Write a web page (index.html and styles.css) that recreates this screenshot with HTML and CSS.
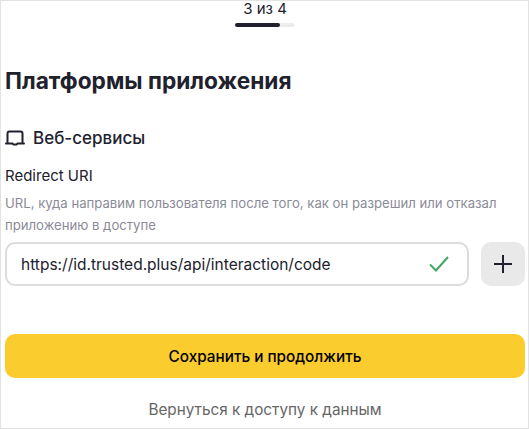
FILE: index.html
```html
<!DOCTYPE html>
<html lang="ru">
  <head>
    <meta charset="UTF-8" />
    <meta name="viewport" content="width=device-width, initial-scale=1.0" />
    <title>Платформы приложения</title>

    <link rel="stylesheet" href="styles.css">
  </head>
  <body>
    <div class="page">
      <!-- Шаги -->
      <div class="steps">
        <span class="steps-text">3 из 4</span>
        <div class="progress"><div class="progress-fill"></div></div>
      </div>

      <h1 class="title">Платформы приложения</h1>

      <div class="platform">
        <svg class="platform-icon" width="20" height="16" viewBox="0 0 20 16" fill="none" stroke="#21212e" stroke-width="2">
          <path d="M2.5 13V3.5C2.5 2.4 3.1 1.5 4.5 1.5H15.5C16.9 1.5 17.5 2.4 17.5 3.5V13" />
          <path d="M1 13.6H7.5L8.5 14.6H11.5L12.5 13.6H19" stroke-linecap="round" />
        </svg>
        <span class="platform-name">Веб-сервисы</span>
      </div>

      <div class="field-label">Redirect URI</div>
      <div class="field-hint">URL, куда направим пользователя после того, как он разрешил или отказал приложению в доступе</div>

      <div class="field-row">
        <div class="input">
          <span class="input-value">https://id.trusted.plus/api/interaction/code</span>
          <svg width="22" height="18" viewBox="0 0 22 18" fill="none" stroke="#3fa665" stroke-width="2">
            <path d="M2 9.5L8 15.5L20 2" />
          </svg>
        </div>
        <button class="add-btn" aria-label="Добавить">
          <svg width="20" height="20" viewBox="0 0 20 20" fill="none" stroke="#21212e" stroke-width="2">
            <path d="M10 1V19M1 10H19" />
          </svg>
        </button>
      </div>

      <button class="save-btn">Сохранить и продолжить</button>
      <a class="back-link">Вернуться к доступу к данным</a>
    </div>
  </body>
</html>
```

FILE: styles.css
```css
body {
  margin: 0;
  background-color: #fff;
}

.page {
  box-sizing: border-box;
  width: 529px;
  height: 429px;
  padding: 0 3px 0 4px;
  border: 1px solid #e2e2e2;
  overflow: hidden;
  font-family: Inter, "Noto Sans", sans-serif;
  color: #21212e;
}

/* Шаги */
.steps {
  display: flex;
  flex-direction: column;
  align-items: center;
}

.steps-text {
  font-size: 15px;
  line-height: 16px;
}

.progress {
  width: 60px;
  height: 4px;
  margin-top: 6px;
  border-radius: 2px;
  background-color: #ececec;
}

.progress-fill {
  width: 45px;
  height: 4px;
  border-radius: 2px;
  background-color: #21212e;
}

.title {
  margin: 39px 0 0;
  font-size: 22.7px;
  line-height: 30px;
  font-weight: 700;
}

.platform {
  display: flex;
  align-items: center;
  gap: 8px;
  margin-top: 30px;
}

.platform-name {
  font-size: 17px;
  line-height: 24px;
  font-weight: 500;
}

.field-label {
  margin-top: 15px;
  font-size: 15px;
  line-height: 22px;
}

.field-hint {
  margin-top: 5px;
  font-size: 13.15px;
  line-height: 22px;
  color: #8b8b98;
}

.field-row {
  display: flex;
  gap: 12px;
  margin-top: 6px;
}

.input {
  flex: 1;
  display: flex;
  align-items: center;
  justify-content: space-between;
  height: 44px;
  box-sizing: border-box;
  padding: 0 17px 0 14px;
  border: 2px solid #dcdcdc;
  border-radius: 10px;
}

.input-value {
  font-size: 15.5px;
}

.add-btn {
  display: flex;
  align-items: center;
  justify-content: center;
  width: 44px;
  height: 44px;
  padding: 0;
  border: none;
  border-radius: 10px;
  background-color: #e9e9e9;
}

.save-btn {
  display: block;
  width: 100%;
  height: 44px;
  margin-top: 48px;
  border: none;
  border-radius: 10px;
  background-color: #fbcc2e;
  color: #000;
  font-family: inherit;
  font-size: 15.3px;
  font-weight: 500;
}

.back-link {
  display: block;
  margin-top: 22px;
  text-align: center;
  font-size: 15.3px;
  line-height: 20px;
  color: #666;
}
```
